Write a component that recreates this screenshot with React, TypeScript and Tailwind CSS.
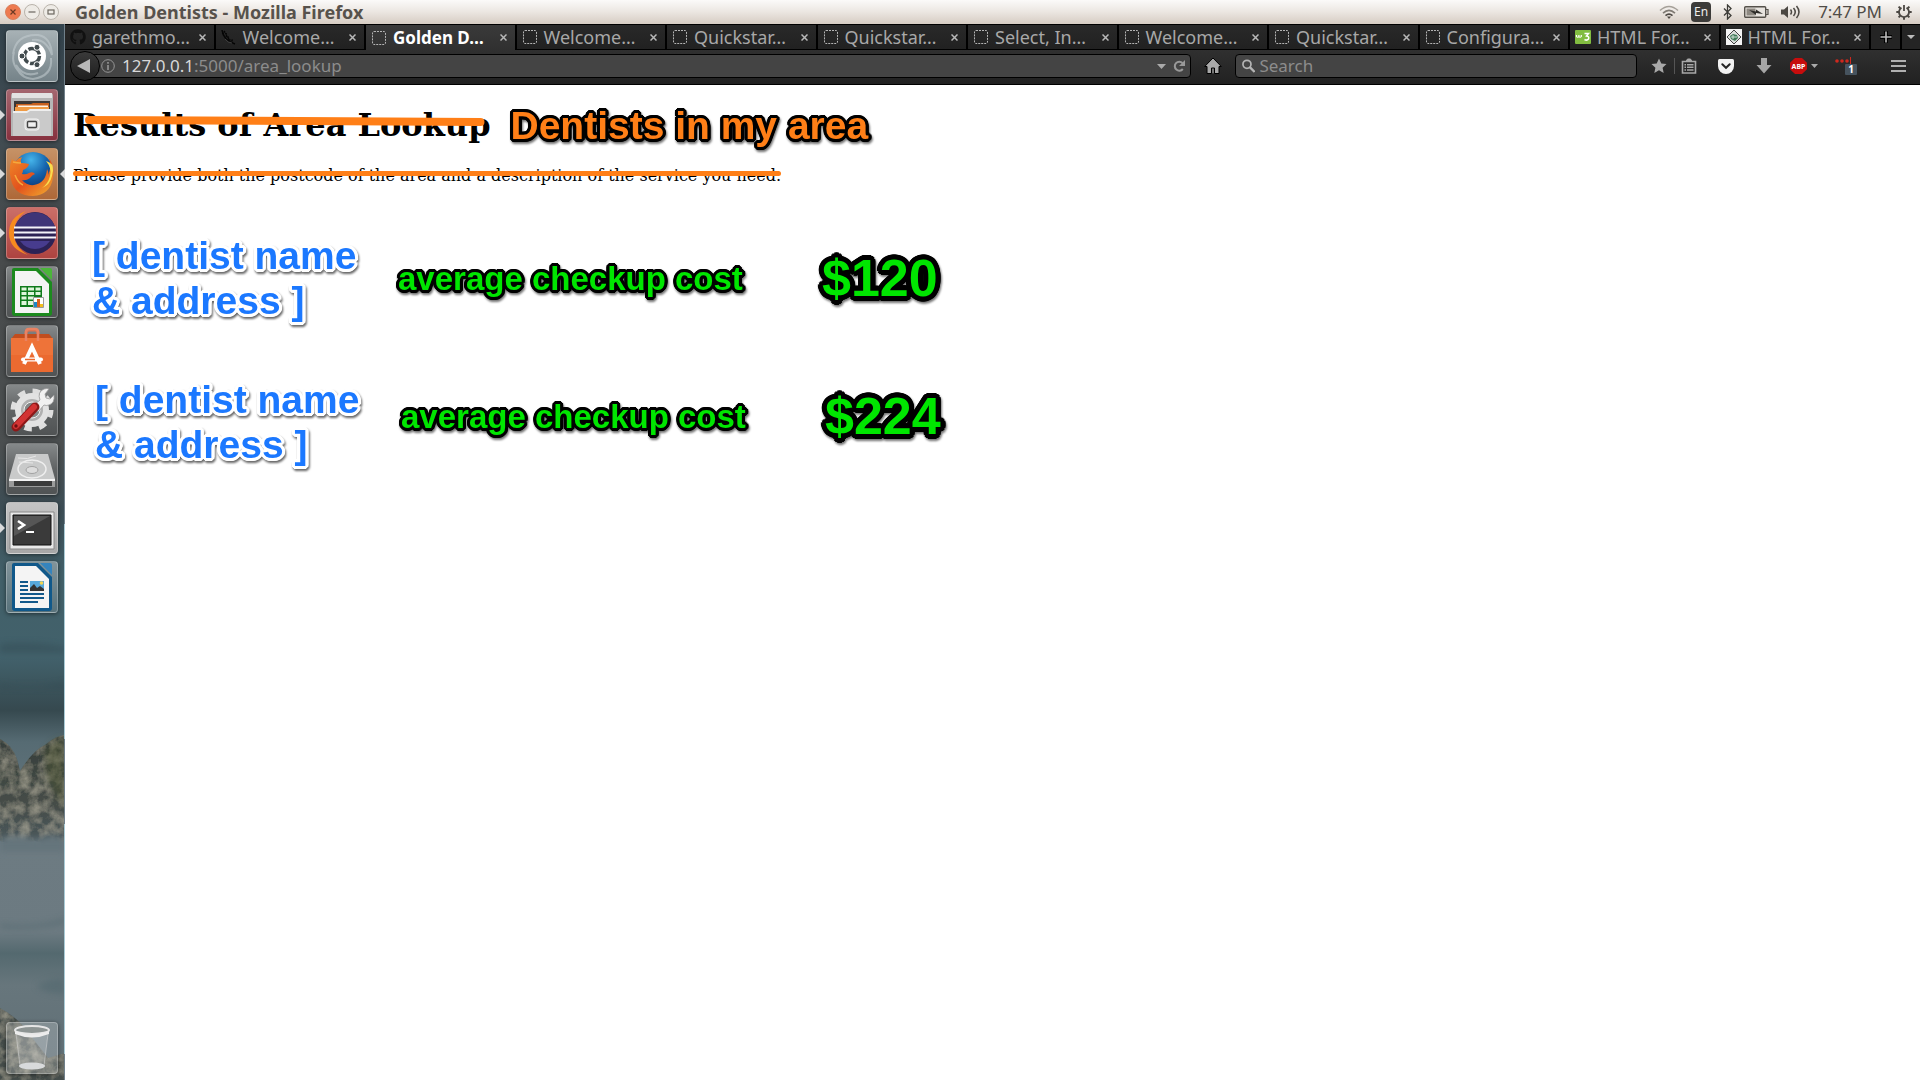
import type { ReactNode } from 'react';
import { FaGithub } from 'react-icons/fa';

const OUTLINE_BLACK =
  'font-bold drop-shadow-[1px_2px_1px_rgba(0,0,0,0.55)] [text-shadow:3px_0_#000,3px_1px_#000,2px_2px_#000,1px_3px_#000,0_3px_#000,-1px_3px_#000,-2px_2px_#000,-3px_1px_#000,-3px_0_#000,-3px_-1px_#000,-2px_-2px_#000,-1px_-3px_#000,0_-3px_#000,1px_-3px_#000,2px_-2px_#000,3px_-1px_#000]';
const OUTLINE_BLACK_THICK =
  'font-bold drop-shadow-[1px_2px_1px_rgba(0,0,0,0.55)] [text-shadow:5px_0_#000,5px_1px_#000,4px_3px_#000,3px_4px_#000,1px_5px_#000,0_5px_#000,-1px_5px_#000,-3px_4px_#000,-4px_3px_#000,-5px_1px_#000,-5px_0_#000,-5px_-1px_#000,-4px_-3px_#000,-3px_-4px_#000,-1px_-5px_#000,0_-5px_#000,1px_-5px_#000,3px_-4px_#000,4px_-3px_#000,5px_-1px_#000,2px_2px_#000,-2px_2px_#000,2px_-2px_#000,-2px_-2px_#000]';
const OUTLINE_WHITE =
  'font-bold drop-shadow-[1px_2px_1px_rgba(0,0,0,0.6)] [text-shadow:3px_0_#fff,3px_1px_#fff,2px_2px_#fff,1px_3px_#fff,0_3px_#fff,-1px_3px_#fff,-2px_2px_#fff,-3px_1px_#fff,-3px_0_#fff,-3px_-1px_#fff,-2px_-2px_#fff,-1px_-3px_#fff,0_-3px_#fff,1px_-3px_#fff,2px_-2px_#fff,3px_-1px_#fff]';

/* ---------- Title bar ---------- */

function WindowButton({ label, close, children }: { label: string; close?: boolean; children: ReactNode }) {
  return (
    <button
      aria-label={label}
      className={
        close
          ? 'flex size-4 items-center justify-center rounded-full border border-[#d9805d] bg-[#ee7a50]'
          : 'flex size-4 items-center justify-center rounded-full border border-[#b9b3ab] bg-[#eeebe6]'
      }
    >
      <svg width="8" height="8" viewBox="0 0 8 8" fill="none" stroke={close ? '#6b3a24' : '#6c675f'} strokeWidth="1.2">
        {children}
      </svg>
    </button>
  );
}

function TitleBar() {
  return (
    <header className="flex h-6 items-center bg-linear-to-b from-[#fbfaf9] via-[#ebe6e1] to-[#d6ccc3] pr-2 pl-[5px] text-[#504c47]">
      <div className="flex gap-[3px]">
        <WindowButton label="Close" close>
          <path d="M1.5 1.5l5 5M6.500 1.500l-5 5" />
        </WindowButton>
        <WindowButton label="Minimize">
          <path d="M.5 4h7" />
        </WindowButton>
        <WindowButton label="Maximize">
          <rect x="1" y="2" width="6" height="4" />
        </WindowButton>
      </div>
      <span className="ml-4 text-[18px] leading-6 font-bold text-[#57524c]">Golden Dentists - Mozilla Firefox</span>
      <div className="ml-auto flex items-center">
        <svg width="20" height="16" viewBox="0 0 20 16" fill="none" strokeWidth="1.6">
          <path d="M1 6.500Q10-1.500 19 6.500" stroke="#a5a099" />
          <path d="M4 9.200Q10 3.600 16 9.200" stroke="#7f7a73" />
          <path d="M6.500 11.700Q10 8.500 13.500 11.700" stroke="#4c4843" />
          <path d="M8 12.500h4l-2 2.500z" fill="#4c4843" stroke="none" />
        </svg>
        <span className="ml-3 flex h-5 w-5 items-center justify-center rounded-sm bg-[#3c3b39] text-[12px] text-[#eee]">En</span>
        <svg className="ml-3" width="9" height="16" viewBox="0 0 9 16" fill="none" stroke="#3c3b37" strokeWidth="1.3">
          <path d="M1 4.500l7 7L4.500 15V1L8 4.500l-7 7" />
        </svg>
        <svg className="ml-3" width="25" height="12" viewBox="0 0 25 12">
          <rect x=".7" y=".7" width="21" height="10.600" rx="1" fill="#e8e4df" stroke="#55514b" strokeWidth="1.4" />
          <rect x="2.500" y="2.500" width="9" height="7" fill="#8d8881" />
          <path d="M22 3.500h2v5h-2" fill="none" stroke="#55514b" strokeWidth="1.2" />
          <path d="M5 4l7 1.500V3.500L19 8l-7-1v2z" fill="#2f2d2a" />
        </svg>
        <svg className="ml-3" width="21" height="14" viewBox="0 0 21 14" fill="none" stroke="#4c4843" strokeWidth="1.5">
          <path d="M0 4.500h3L7 1v12L3 9.500H0z" fill="#4c4843" stroke="none" />
          <path d="M9.500 4.500q2 2.500 0 5M12.500 3q3.500 4 0 8M15.500 1q5 6 0 12" />
        </svg>
        <span className="ml-4 text-[17px] leading-6">7:47 PM</span>
        <svg className="ml-[14px]" width="16" height="16" viewBox="0 0 16 16" fill="none" stroke="#4c4843">
          <path d="M5.500 3.700a5 5 0 1 0 5 0" strokeWidth="1.800" />
          <path d="M8 1v6" strokeWidth="1.800" />
          <path d="M.3 8h2.700M13 8h2.700M8 13v2.700M2.600 2.600l1.700 1.700M13.400 2.600l-1.700 1.700M2.600 13.400l1.700-1.700M13.400 13.400l-1.700-1.700" strokeWidth="2" />
        </svg>
      </div>
    </header>
  );
}

/* ---------- Tabs ---------- */

function BlankFavicon() {
  return (
    <svg width="14" height="14" viewBox="0 0 14 14" className="shrink-0">
      <rect x=".5" y=".5" width="13" height="13" rx="1.500" fill="none" stroke="#b4b4b4" strokeDasharray="2 1" />
    </svg>
  );
}

function FlaskFavicon() {
  return (
    <svg width="15" height="16" viewBox="0 0 15 16" className="shrink-0" fill="none" stroke="#050505">
      <path d="M1 1q1 10 13 14" strokeWidth="1.500" />
      <path d="M3 2l2 3M1 4l5 1-1 3 3 0-1 3 4 0 0 3" strokeWidth="1.400" strokeDasharray="2 1" />
      <path d="M4 10q3 4 7 4" stroke="#4a4a4a" strokeWidth=".8" />
    </svg>
  );
}

function SchoolsFavicon() {
  return (
    <svg width="16" height="14" viewBox="0 0 16 14" className="shrink-0" fill="none" stroke="#fff" strokeWidth="1.500">
      <rect width="16" height="14" rx="1" fill="#82bd41" stroke="none" />
      <path d="M1.500 5v1.500q1.200 1.500 2.400 0V5v1.500q1.200 1.500 2.400 0V5" strokeWidth="1.200" />
      <path d="M9.500 3.500h4L11.500 6q3 .3 2 3-1.500 2-4 .5" />
    </svg>
  );
}

function DiamondFavicon() {
  return (
    <svg width="16" height="16" viewBox="0 0 16 16" className="shrink-0">
      <rect width="16" height="16" fill="#f4f4f4" />
      <path d="M8 1l7 7-7 7-7-7z" fill="#d9dedb" stroke="#444" />
      <path d="M4 7l3-2 4 1 1 3-3 3-4-2z" fill="#3f7a58" />
      <path d="M5 8h6M7 6v4" stroke="#cfe0d5" />
    </svg>
  );
}

const tabs: { title: string; icon: ReactNode; active?: boolean }[] = [
  { title: 'garethmo…', icon: <FaGithub size={16} className="shrink-0 text-[#111]" /> },
  { title: 'Welcome…', icon: <FlaskFavicon /> },
  { title: 'Golden D…', icon: <BlankFavicon />, active: true },
  { title: 'Welcome…', icon: <BlankFavicon /> },
  { title: 'Quickstar…', icon: <BlankFavicon /> },
  { title: 'Quickstar…', icon: <BlankFavicon /> },
  { title: 'Select, In…', icon: <BlankFavicon /> },
  { title: 'Welcome…', icon: <BlankFavicon /> },
  { title: 'Quickstar…', icon: <BlankFavicon /> },
  { title: 'Configura…', icon: <BlankFavicon /> },
  { title: 'HTML For…', icon: <SchoolsFavicon /> },
  { title: 'HTML For…', icon: <DiamondFavicon /> },
];

function TabStrip() {
  return (
    <div className="flex h-[26px] border-t border-black bg-[#303030]">
      {tabs.map((tab, i) => (
        <div
          key={i}
          className={
            tab.active
              ? 'flex min-w-0 flex-1 items-center border-r-2 border-black bg-linear-to-b from-[#3a3a3a] to-[#303030] pr-2 pl-[5px] text-white'
              : 'flex min-w-0 flex-1 items-center border-r-2 border-b border-black bg-linear-to-b from-[#292929] to-[#212121] pr-2 pl-[5px] text-[#a8a8a8]'
          }
        >
          <div className="flex w-4 justify-center">{tab.icon}</div>
          <button
            className={
              tab.active
                ? 'ml-[6px] min-w-0 flex-1 text-left text-[17px] leading-6 font-bold whitespace-nowrap'
                : 'ml-[6px] min-w-0 flex-1 text-left text-[18px] leading-6 whitespace-nowrap'
            }
          >
            {tab.title}
          </button>
          <button aria-label="Close tab">
            <svg width="7" height="7" viewBox="0 0 7 7" stroke="#b8b8b8" strokeWidth="1.500">
              <path d="M.5.5l6 6M6.500.5l-6 6" />
            </svg>
          </button>
        </div>
      ))}
      <button aria-label="New tab" className="flex w-[31px] items-center justify-center border-r-2 border-b border-black bg-[#242424]">
        <svg width="14" height="14" viewBox="0 0 14 14">
          <path d="M5 1h4v4h4v4H9v4H5V9H1V5h4z" fill="#000" />
          <path d="M6.200 1.500h1.600v4.700h4.700v1.600H7.800v4.700H6.200V7.800H1.500V6.200h4.700z" fill="#bbb" />
        </svg>
      </button>
      <button aria-label="List all tabs" className="flex w-[18px] items-center justify-center border-b border-black bg-[#242424]">
        <svg width="8" height="4" viewBox="0 0 8 4">
          <path d="M0 0h8L4 4z" fill="#bbb" />
        </svg>
      </button>
    </div>
  );
}

/* ---------- Navigation toolbar ---------- */

function NavBar() {
  return (
    <div className="flex h-[35px] items-center border-b border-black bg-linear-to-b from-[#303030] to-[#212121] pr-[14px] pb-[2px] pl-[5px]">
      <button
        aria-label="Back"
        className="z-10 -my-1 flex size-[30px] shrink-0 items-center justify-center rounded-full border border-black bg-linear-to-b from-[#3a3a3a] to-[#1e1e1e] pr-1"
      >
        <svg width="13" height="14" viewBox="0 0 13 14">
          <path d="M13 0v14L0 7z" fill="#b9b9b9" />
        </svg>
      </button>
      <div className="-ml-4 flex h-6 flex-1 items-center rounded-r-sm border border-black bg-[#444] pl-4">
        <svg width="14" height="14" viewBox="0 0 14 14" fill="none" stroke="#969696">
          <circle cx="7" cy="7" r="6.300" strokeWidth="1" />
          <path d="M7 6v5M7 3v1.800" strokeWidth="1.600" />
        </svg>
        <a href="#area" className="ml-[7px] text-[17px] leading-5 text-[#8c8c8c]">
          <span className="text-[#d8d8d8]">127.0.0.1</span>:5000/area_lookup
        </a>
        <button aria-label="Show history" className="ml-auto">
          <svg width="9" height="5" viewBox="0 0 9 5">
            <path d="M0 0h9L4.500 5z" fill="#aaa" />
          </svg>
        </button>
        <button aria-label="Reload" className="mr-[5px] ml-[7px]">
          <svg width="12" height="12" viewBox="0 0 12 12" fill="none" stroke="#999" strokeWidth="2">
            <path d="M9.500 3A4.500 4.500 0 1 0 9.800 9" />
            <path d="M12 0v6H6z" fill="#999" stroke="none" />
          </svg>
        </button>
      </div>
      <button aria-label="Home" className="mx-[13px]">
        <svg width="18" height="18" viewBox="0 0 18 18">
          <path d="M9 1l8.300 8.500H15V16.500H3V9.500H.7z" fill="#a9a9a9" stroke="#000" strokeWidth="1" />
          <path d="M7.500 16.500V11h3v5.500" fill="#777" stroke="#000" />
        </svg>
      </button>
      <label className="flex h-6 w-[402px] items-center rounded-sm border border-black bg-[#444] pl-[6px]">
        <svg width="14" height="14" viewBox="0 0 14 14" fill="none" stroke="#b4b4b4">
          <circle cx="5.200" cy="5.200" r="4.200" strokeWidth="1.800" />
          <path d="M8.200 8.200l5 5" strokeWidth="2.400" />
        </svg>
        <input
          aria-label="Search"
          placeholder="Search"
          className="ml-[4px] w-full bg-transparent text-[17px] leading-5 outline-none placeholder:text-[#8c8c8c]"
        />
      </label>
      <button aria-label="Bookmark" className="ml-[14px]">
        <svg width="16" height="16" viewBox="0 0 16 16">
          <path d="M8 .5l2.300 5 5.200.6-3.900 3.600 1.100 5.300L8 12.300 3.300 15l1.100-5.300L.5 6.100l5.200-.6z" fill="#a8a8a8" />
        </svg>
      </button>
      <span className="ml-[7px] h-4 w-px bg-[#555]" />
      <button aria-label="Bookmarks list" className="ml-[6px]">
        <svg width="16" height="16" viewBox="0 0 16 16" fill="none" stroke="#a8a8a8">
          <path d="M1.500 3.500h13v11.500h-13z" strokeWidth="1.600" />
          <path d="M5 3.500L6.500 1h3L11 3.500z" fill="#a8a8a8" />
          <path d="M3.500 6.700h1.500M6 6.700h6.500M3.500 9.300h1.500M6 9.300h6.500M3.500 12h1.500M6 12h6.500" strokeWidth="1.500" />
        </svg>
      </button>
      <button aria-label="Pocket" className="ml-[21px]">
        <svg width="16" height="15" viewBox="0 0 16 15">
          <path d="M1.500 0h13Q16 0 16 1.500V7a8 8 0 0 1-16 0V1.500Q0 0 1.500 0z" fill="#f2f2f2" />
          <path d="M4.300 5.300L8 8.800l3.700-3.500" fill="none" stroke="#222" strokeWidth="2" strokeLinecap="round" />
        </svg>
      </button>
      <button aria-label="Downloads" className="ml-[22px]">
        <svg width="16" height="16" viewBox="0 0 16 16">
          <path d="M5 0h6v7h4.500L8 15.500.5 7H5z" fill="#a5a5a5" />
        </svg>
      </button>
      <button aria-label="Adblock Plus" className="ml-[18px] flex items-center gap-1">
        <svg width="17" height="16" viewBox="0 0 17 16">
          <path d="M5 0h7l5 4.700v6.600L12 16H5l-5-4.700V4.700z" fill="#c70d0d" />
          <text x="8.500" y="10.700" textAnchor="middle" fontSize="7" fontWeight="700" fill="#fff">
            ABP
          </text>
        </svg>
        <svg width="7" height="4" viewBox="0 0 7 4">
          <path d="M0 0h7L3.500 4z" fill="#aaa" />
        </svg>
      </button>
      <button aria-label="Saved logins" className="ml-[17px]">
        <svg width="22" height="18" viewBox="0 0 22 18">
          <g fill="#d0281e">
            <circle cx="2" cy="4" r="1.800" />
            <circle cx="7" cy="4" r="1.800" />
            <circle cx="12" cy="4" r="1.800" />
            <path d="M15 0h1v7h-1z" />
          </g>
          <rect x="10" y="7" width="12" height="11" rx="1" fill="#46535e" />
          <text x="16" y="16" textAnchor="middle" fontSize="10" fontWeight="700" fill="#fff">
            1
          </text>
        </svg>
      </button>
      <button aria-label="Menu" className="ml-[34px]">
        <svg width="15" height="12" viewBox="0 0 15 12" fill="#b0b0b0">
          <path d="M0 0h15v2H0zM0 5h15v2H0zM0 10h15v2H0z" />
        </svg>
      </button>
    </div>
  );
}

/* ---------- Launcher ---------- */

function Wallpaper() {
  return (
    <svg className="absolute inset-0 size-full" viewBox="0 0 65 1056" preserveAspectRatio="none">
      <defs>
        <linearGradient id="sky" x1="0" y1="0" x2="0" y2="1">
          <stop offset="0" stopColor="#33434d" />
          <stop offset=".1" stopColor="#414c52" />
          <stop offset=".22" stopColor="#484b4c" />
          <stop offset=".4" stopColor="#4b4f50" />
          <stop offset=".46" stopColor="#3c4d55" />
          <stop offset=".52" stopColor="#426069" />
          <stop offset=".6" stopColor="#42616b" />
          <stop offset=".65" stopColor="#36494f" />
          <stop offset=".68" stopColor="#566b73" />
          <stop offset=".78" stopColor="#6d7b82" />
          <stop offset=".86" stopColor="#6c7a81" />
          <stop offset=".88" stopColor="#54696f" />
          <stop offset=".91" stopColor="#67767c" />
          <stop offset="1" stopColor="#5f6e75" />
        </linearGradient>
        <linearGradient id="rock" x1="0" y1="0" x2="0" y2="1">
          <stop offset="0" stopColor="#343d3a" />
          <stop offset=".6" stopColor="#454c47" />
          <stop offset="1" stopColor="#49575c" />
        </linearGradient>
        <filter id="grain" x="0" y="0" width="1" height="1">
          <feTurbulence type="fractalNoise" baseFrequency=".1" numOctaves="4" seed="4" result="noise" />
          <feColorMatrix in="noise" values="0 0 0 0 .5  0 0 0 0 .48  0 0 0 0 .38  .9 0 0 0 -.3" result="tint" />
          <feComposite in="tint" in2="SourceGraphic" operator="in" result="speck" />
          <feMerge>
            <feMergeNode in="SourceGraphic" />
            <feMergeNode in="speck" />
          </feMerge>
        </filter>
        <filter id="mist" x="-.2" y="-.5" width="1.400" height="2">
          <feGaussianBlur stdDeviation="3" />
        </filter>
      </defs>
      <rect width="65" height="1056" fill="url(#sky)" />
      <path d="M0 620q30-4 65 3v6H0zM0 660q30 6 65-2v6H0z" fill="#2f434b" opacity=".35" filter="url(#mist)" />
      <g filter="url(#grain)">
        <path d="M0 715q12 6 17 20l3 12q14-22 25-26 12-10 20-10v106q-16 6-30 0-20 6-35 0z" fill="url(#rock)" />
        <path d="M0 984q18 10 26 22l22 28 17-5v27H0z" fill="#454d4b" />
      </g>
      <path d="M44 726q10-12 21-12v68q-10-8-18-30z" fill="#4b5233" opacity=".5" filter="url(#mist)" />
      <path d="M0 814q20-6 35 2 16-8 30-2v14H0z" fill="#65747c" filter="url(#mist)" />
      <path d="M0 900q40 4 65-6v5q-30 8-65 5zM36 962q20-10 29-6v14q-20 0-29-8z" fill="#4e656c" opacity=".5" filter="url(#mist)" />
      <path d="M64.500 0v1056" stroke="#70808a" strokeWidth="1" />
      <path d="M64.500 500v215M64.500 800v230" stroke="#a9cbd6" strokeWidth="1" />
    </svg>
  );
}

type LauncherItem = { name: string; tile: string; running?: boolean; focused?: boolean; art: ReactNode };

const plainTile = 'bg-linear-to-b from-[#85898a] via-[#606364] to-[#505354]';

const launcherItems: LauncherItem[] = [
  {
    name: 'Search your computer',
    tile: 'bg-linear-to-b from-[#a7b1b5] to-[#758389]',
    art: (
      <>
        <path d="M7 24Q10 4 32 5q13 2 14 20Q40 8 26 10M45 28q2 18-18 21-14-1-17-14 8 13 22 8M8 22q-4 14 10 24" fill="none" stroke="#c5ced1" strokeWidth="2" opacity=".55" />
        <circle cx="26" cy="26" r="14" fill="#fff" />
        <circle cx="26" cy="26" r="7.500" fill="none" stroke="#424b4e" strokeWidth="3.400" strokeDasharray="13.700 2" />
        <circle cx="16" cy="26" r="3" fill="#424b4e" stroke="#fff" />
        <circle cx="31" cy="17.300" r="3" fill="#424b4e" stroke="#fff" />
        <circle cx="31" cy="34.700" r="3" fill="#424b4e" stroke="#fff" />
      </>
    ),
  },
  {
    name: 'Files',
    tile: 'bg-linear-to-b from-[#a4666f] to-[#87313f]',
    running: true,
    art: (
      <>
        <path d="M7 4h38q2 0 2 3v40H5V7q0-3 2-3z" fill="#b5b5b5" />
        <path d="M6 4h40v5H6z" fill="#e3e3e3" />
        <path d="M8 12h36v11H8z" fill="#3b3836" />
        <path d="M10 15l15 0 2-1h16v9H10z" fill="#c8601d" />
        <path d="M9 18h34v5H9z" fill="#ef9b45" />
        <path d="M12 16.500h30v1.500H12z" fill="#fff3e4" />
        <path d="M7 22h14l3-2h21v27H7z" fill="#cacaca" />
        <path d="M7 22h14l3-2h21v2H24l-3 2H7z" fill="#eee" />
        <rect x="19" y="30" width="14" height="11" rx="2.500" fill="#d9d9d9" stroke="#f5f5f5" />
        <rect x="21.500" y="32.500" width="9" height="6" rx="1" fill="#f1f1f1" stroke="#444" strokeWidth="1.400" />
      </>
    ),
  },
  {
    name: 'Firefox Web Browser',
    tile: 'bg-linear-to-b from-[#c69266] to-[#ae6838]',
    running: true,
    focused: true,
    art: (
      <>
        <defs>
          <radialGradient id="globe" cx=".45" cy=".2" r=".8">
            <stop offset="0" stopColor="#45b4ea" />
            <stop offset=".5" stopColor="#1463ac" />
            <stop offset="1" stopColor="#0a2c68" />
          </radialGradient>
          <linearGradient id="fox" x1="0" y1="0" x2="1" y2="1">
            <stop offset="0" stopColor="#f08a28" />
            <stop offset=".5" stopColor="#e2521d" />
            <stop offset="1" stopColor="#f3b230" />
          </linearGradient>
        </defs>
        <circle cx="27" cy="24" r="20" fill="url(#globe)" />
        <path d="M6 11q1 2 4 2 2-3 6-4-2 3-1 6 4 0 8 1-1 4-6 6 0 2-1 4 4 1 7-1 4-2 6 1-3 1-5 4-4 3-8 2 5 6 12 5 12-2 13-16 2 3 1 6 4-8 1-17 6 9 4 20-3 17-20 18Q9 48 5 32 2 20 6 11z" fill="url(#fox)" />
        <path d="M40 13q6 7 4 15-2 8-8 12 8-3 10-12l1-5q1-8-7-10z" fill="#f9dd4e" />
        <path d="M7 14q4 1 8 1M9 27q3 8 8 10" stroke="#f6a93c" strokeWidth="1.500" fill="none" />
      </>
    ),
  },
  {
    name: 'Eclipse',
    tile: 'bg-linear-to-b from-[#cb6f68] to-[#ae4340]',
    running: true,
    art: (
      <>
        <path d="M20 4Q3 10 3 26t19 22Q8 40 8 26T20 4z" fill="#f68b1f" />
        <circle cx="29" cy="26" r="21" fill="#2c2255" />
        <path d="M9 20a21 21 0 0 1 40 0z" fill="#3e3477" />
        <path d="M14 34h30q-6 8-15 8t-15-8z" fill="#473c8e" />
        <path d="M8 20.500h42M8 25.500h42M8 30.500h42" stroke="#f4f3fa" strokeWidth="2.200" />
      </>
    ),
  },
  {
    name: 'LibreOffice Calc',
    tile: plainTile,
    art: (
      <>
        <path d="M6 4q0-2 2-2h24l14 14v31q0 3-3 3H9q-3 0-3-3z" fill="#1c8a1e" />
        <path d="M9 5h21l13 13v29H9z" fill="#f4f4f4" />
        <path d="M34 2h10q2 0 2 2v10z" fill="#4bb53a" />
        <path d="M14 20h22v21H14z" fill="#107a1c" />
        <g fill="#dff5dc">
          <path d="M15.500 21.500h5v3h-5zM22 21.500h6v3h-6zM29.500 21.500h5v3h-5zM15.500 26h5v3h-5zM22 26h6v3h-6zM29.500 26h5v3h-5zM15.500 30.500h5v3h-5zM22 30.500h6v3h-6zM15.500 35h5v4h-5zM22 35h6v4h-6z" />
        </g>
        <path d="M27.500 31.500h10v10h-10z" fill="#fff" stroke="#999" />
        <path d="M28 36h3v5h-3z" fill="#1b86c8" />
        <path d="M31 33h3v8h-3z" fill="#d9601f" />
        <path d="M34 38h3v3h-3z" fill="#f1bd1d" />
      </>
    ),
  },
  {
    name: 'Ubuntu Software',
    tile: plainTile,
    art: (
      <>
        <path d="M20 16V8q0-3 3-3h6q3 0 3 3v8" fill="none" stroke="#dd6f4c" strokeWidth="3" />
        <path d="M5 14l4-5h34l4 5z" fill="#c14d1e" />
        <path d="M5 13h42v34H5z" fill="#ee7339" />
        <path d="M20 11V7q0-3 3-3h6q3 0 3 3v9M20 9v7" fill="none" stroke="#e98262" strokeWidth="2.500" />
        <path d="M5 30h42v17H5z" fill="#e9662c" opacity=".7" />
        <path d="M18 39l8-17 8 17" fill="none" stroke="#fff" strokeWidth="4" />
        <path d="M17 34.500h18" stroke="#fff" strokeWidth="4" strokeLinecap="round" />
        <path d="M19 34.500h10" stroke="#ec6a2e" strokeWidth="1.600" />
      </>
    ),
  },
  {
    name: 'System Settings',
    tile: plainTile,
    art: (
      <>
        <circle cx="26" cy="26" r="18.500" fill="none" stroke="#dedede" strokeWidth="6" strokeDasharray="7.300 7.230" />
        <circle cx="26" cy="26" r="14" fill="#b0b0b0" stroke="#e2e2e2" strokeWidth="6" />
        <circle cx="26" cy="26" r="8" fill="#858787" stroke="#f2f2f2" />
        <path d="M28 21l6-5q-3-8 4-11 3-1 5 0l-4 5 1 4 4 1 4-4q1 8-5 10-3 1-5 0l-6 7z" fill="#f1f1f1" stroke="#999" strokeWidth=".8" />
        <path d="M10 43L29 23" stroke="#8d1818" strokeWidth="9" strokeLinecap="round" />
        <path d="M10 42L28 23" stroke="#d23434" strokeWidth="6" strokeLinecap="round" />
        <circle cx="10" cy="42" r="1.700" fill="#6d1010" />
      </>
    ),
  },
  {
    name: 'Hard disk',
    tile: plainTile,
    art: (
      <>
        <path d="M10 11h32l7 25H3z" fill="#c9caca" />
        <path d="M3 36h46v8H3z" fill="#9a9b9b" />
        <path d="M8 38h38v5H8z" fill="#3a3b3b" />
        <path d="M3 36h46v2H3z" fill="#f3f3f3" />
        <ellipse cx="26" cy="26" rx="14" ry="9" fill="none" stroke="#eee" strokeWidth="1.500" />
        <ellipse cx="26" cy="27" rx="6" ry="3.500" fill="#dcdcdc" stroke="#a2a2a2" />
        <path d="M12 15q10 2 18-2M13 19l14 1" stroke="#e8e8e8" fill="none" />
      </>
    ),
  },
  {
    name: 'Terminal',
    tile: 'bg-linear-to-b from-[#c4c4c4] to-[#a7a7a7]',
    running: true,
    art: (
      <>
        <path d="M4 10h44v37H4z" fill="#e9e9e9" stroke="#888" />
        <path d="M7 13h38v30H7z" fill="#3a3a3a" stroke="#111" />
        <path d="M8 14h36L8 34z" fill="#565656" />
        <path d="M12 19l6 4-6 4" fill="none" stroke="#fff" strokeWidth="2.600" />
        <path d="M20 30h8" stroke="#fff" strokeWidth="2.200" />
      </>
    ),
  },
  {
    name: 'LibreOffice Writer',
    tile: 'bg-linear-to-b from-[#82949a] to-[#58727b]',
    art: (
      <>
        <path d="M6 4q0-2 2-2h24l14 14v31q0 3-3 3H9q-3 0-3-3z" fill="#10588a" />
        <path d="M9 5h21l13 13v29H9z" fill="#f4f4f4" />
        <path d="M34 2h10q2 0 2 2v10z" fill="#3584bd" />
        <path d="M14 21h8M14 25h8M14 29h8M14 33h24M14 37h24M14 41h18" stroke="#12598b" strokeWidth="2" />
        <path d="M24 20h14v10H24z" fill="#57a8dc" />
        <path d="M24 30v-3l4-4 3 4 3-2 4 3v2z" fill="#333" />
        <circle cx="35.500" cy="22" r="1.800" fill="#f1d552" />
      </>
    ),
  },
];

function LauncherTile({ item }: { item: LauncherItem }) {
  return (
    <div className="relative flex w-full justify-center pr-px">
      {item.running && <span className="absolute top-[21px] left-0 border-y-[5px] border-l-[5px] border-y-transparent border-l-[#d9dadb]" />}
      {item.focused && <span className="absolute top-[21px] right-0 border-y-[5px] border-r-[5px] border-y-transparent border-r-[#d9dadb]" />}
      <button aria-label={item.name} className={'size-[52px] overflow-hidden rounded-[4px] border border-white/25 shadow-[0_1px_4px_rgba(0,0,0,0.5)] ' + item.tile}>
        <svg viewBox="1 1 50 50" className="size-full">
          {item.art}
        </svg>
      </button>
    </div>
  );
}

function Launcher() {
  return (
    <nav aria-label="Launcher" className="relative flex w-[65px] shrink-0 flex-col">
      <Wallpaper />
      <div className="relative flex flex-1 flex-col gap-[7px] py-[6px]">
        {launcherItems.map((item) => (
          <LauncherTile key={item.name} item={item} />
        ))}
        <div className="mt-auto">
          <LauncherTile
            item={{
              name: 'Trash',
              tile: 'bg-white/20',
              art: (
                <>
                  <path d="M10 10h32l-4 34q-12 5-24 0z" fill="#fff" opacity=".18" />
                  <path d="M10 12l4 32M42 12l-4 32" stroke="#ddd" opacity=".5" />
                  <ellipse cx="26" cy="44" rx="13" ry="3.500" fill="#d8dadb" />
                  <ellipse cx="26" cy="8" rx="17" ry="4" fill="#8d9493" stroke="#e6e6e6" strokeWidth="2" />
                  <path d="M9 9q17 7 34 0v3q-17 7-34 0z" fill="#ececec" />
                </>
              ),
            }}
          />
        </div>
      </div>
    </nav>
  );
}

/* ---------- Page ---------- */

function DentistRow({ price, className, costClassName }: { price: string; className: string; costClassName: string }) {
  return (
    <li className={'flex items-center ' + className}>
      <p className={'w-[306px] text-[39px] leading-[45px] text-[#1b78ff] ' + OUTLINE_WHITE}>
        [ dentist name
        <br />
        &amp; address ]
      </p>
      <div className={'flex items-center ' + costClassName}>
        <span className={'w-[424px] text-[33px] leading-[37px] text-[#00e600] ' + OUTLINE_BLACK}>average checkup cost</span>
        <span className={'text-[52px] leading-[58px] text-[#00e600] ' + OUTLINE_BLACK_THICK}>{price}</span>
      </div>
    </li>
  );
}

function Page() {
  return (
    <main className="flex-1 bg-white px-2 pt-[22px] font-['DejaVu_Serif',serif] text-black">
      <div className="flex items-center">
        <h1 className="relative text-[32px] leading-[37px] font-bold whitespace-nowrap">
          Results of Area Lookup
          <svg className="absolute top-[8px] left-0 h-4 w-full" viewBox="0 0 416 16" preserveAspectRatio="none">
            <path d="M16 5L406 7" stroke="#ff7f17" strokeWidth="8" strokeLinecap="round" />
          </svg>
        </h1>
        <span className={"ml-5 font-['Liberation_Sans',sans-serif] text-[39px] leading-[37px] whitespace-nowrap text-[#ff7f17] " + OUTLINE_BLACK}>
          Dentists in my area
        </span>
      </div>
      <p className="relative mt-[22px] w-fit text-[16px] leading-[19px]">
        Please provide both the postcode of the area and a description of the service you need.
        <span className="absolute top-[5px] left-0 h-[5px] w-full rounded-full bg-[#ff7f17]" />
      </p>
      <ul className="mt-[48px] flex flex-col gap-[54px] pl-[19px] font-['Liberation_Sans',sans-serif] whitespace-nowrap">
        <DentistRow price="$120" className="" costClassName="" />
        <DentistRow price="$224" className="pl-[3px]" costClassName="pb-3" />
      </ul>
    </main>
  );
}

export default function App() {
  return (
    <div className="flex min-h-screen flex-col font-['Noto_Sans',sans-serif]">
      <TitleBar />
      <div className="flex flex-1">
        <Launcher />
        <div className="flex min-w-0 flex-1 flex-col">
          <TabStrip />
          <NavBar />
          <Page />
        </div>
      </div>
    </div>
  );
}
